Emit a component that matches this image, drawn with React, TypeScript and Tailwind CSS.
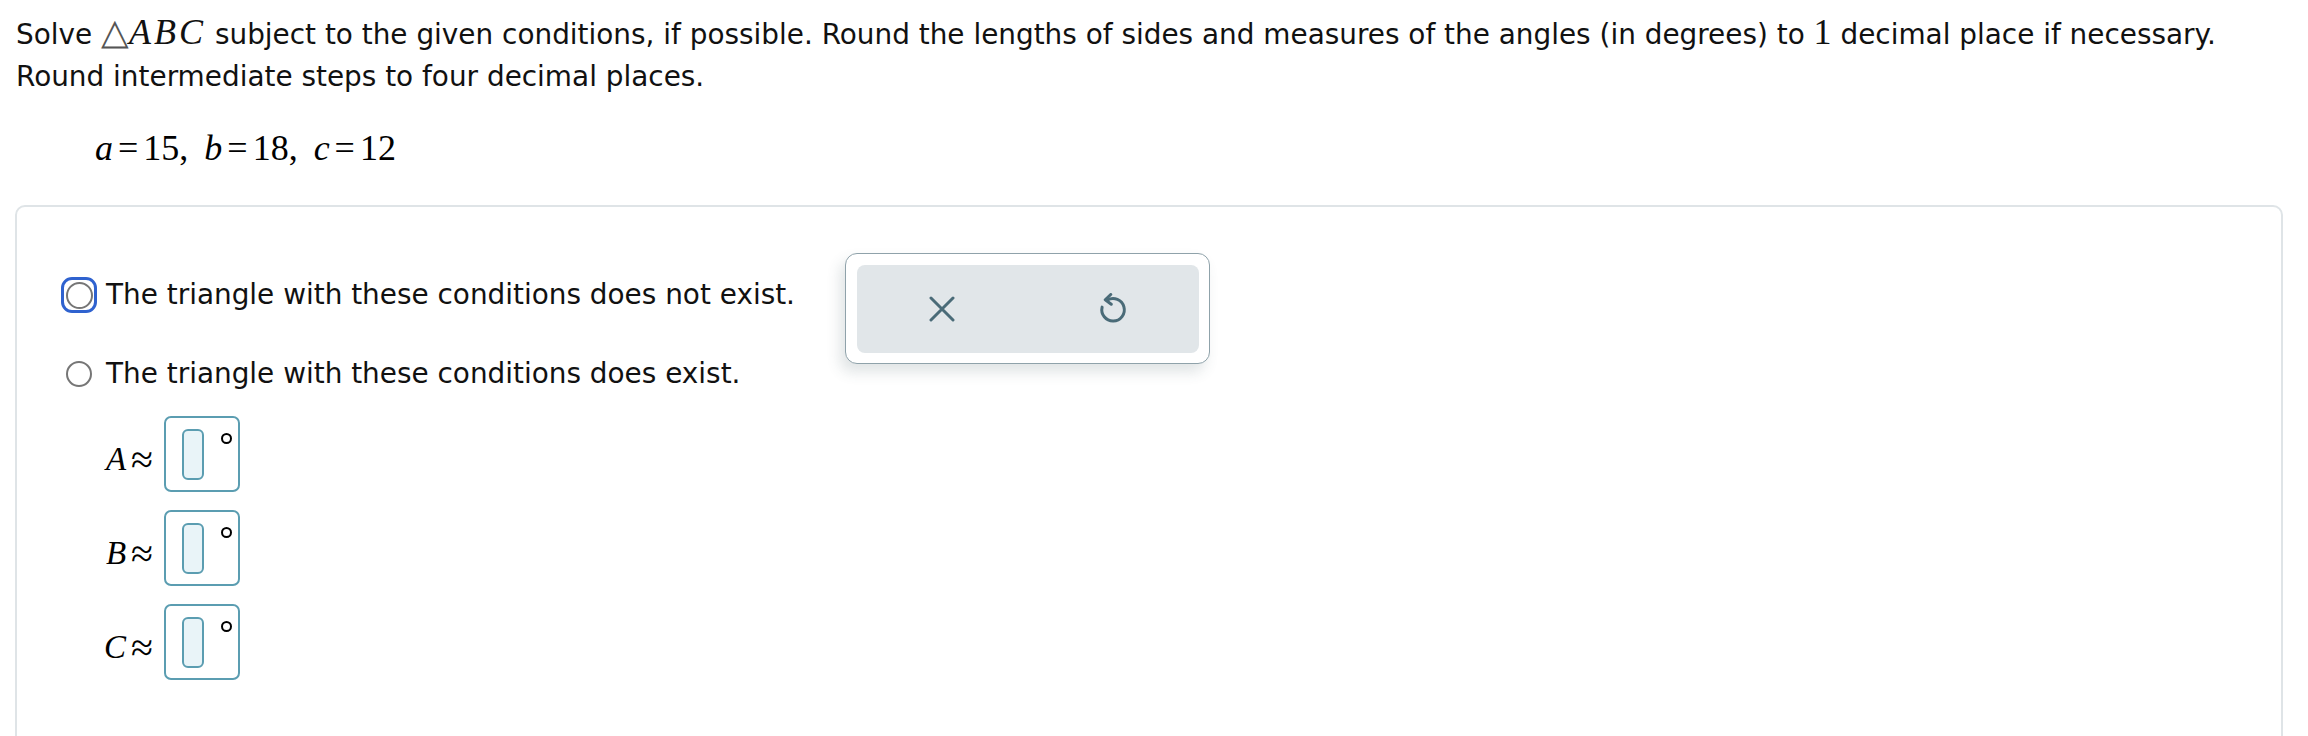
import React from "react";

const serif = { fontFamily: '"Liberation Serif", "Times New Roman", serif' };

function XIcon() {
  return (
    <svg width="26" height="26" viewBox="0 0 26 26" fill="none">
      <path d="M2 2 L24 24 M24 2 L2 24" stroke="#4a6b78" strokeWidth="3" strokeLinecap="round" />
    </svg>
  );
}

function UndoIcon() {
  return (
    <svg width="30" height="32" viewBox="0 0 24 25.6" fill="none">
      <path d="M7.6 5.6 A9 9 0 1 1 3.3 11.3" stroke="#4a6b78" strokeWidth="2.4" strokeLinecap="round" />
      <path d="M10.2 1.2 L5.8 5.4 L10.6 9" stroke="#4a6b78" strokeWidth="2.4" strokeLinecap="round" strokeLinejoin="round" />
    </svg>
  );
}

function AngleRow({ letter }: { letter: string }) {
  return (
    <div className="flex items-start mb-[18px]">
      <div className="w-[92px] h-[76px] flex items-center justify-end pt-[12px] text-black" style={serif}>
        <span className="italic text-[33px]">{letter}</span>
        <span className="ml-[5px] text-[40px] leading-none">≈</span>
      </div>
      <div className="ml-[11px] w-[76px] h-[76px] border-2 border-[#5b9db1] rounded-[7px] flex items-start pl-[16px] pt-[11px]">
        <div className="w-[22px] h-[51px] border-2 border-[#5b9db1] rounded-[6px] bg-[#e9f4f8]" />
        <div className="ml-[17px] mt-[4px] w-[11px] h-[11px] rounded-full border-2 border-black" />
      </div>
    </div>
  );
}

export default function App() {
  return (
    <div
      className="relative w-[2308px] h-[736px] overflow-hidden bg-white text-[#111]"
      style={{ fontFamily: '"DejaVu Sans", Verdana, sans-serif' }}
    >
      <div className="pl-[16px] pt-[11px] text-[27.9px] leading-[42px]">
        <div className="whitespace-nowrap">
          Solve{" "}
          <span style={serif} className="text-[36px]">
            <span className="text-[#555]">△</span>
            <span className="italic tracking-[3px]">ABC</span>
          </span>{" "}
          subject to the given conditions, if possible. Round the lengths of sides and measures of the angles (in degrees) to{" "}
          <span style={serif} className="text-[36px]">1</span> decimal place if necessary.
        </div>
        <div>Round intermediate steps to four decimal places.</div>
      </div>

      <div className="pl-[95px] mt-[25px] h-[50px] leading-[50px] text-[36px] text-black whitespace-nowrap" style={serif}>
        <span className="italic">a</span>
        <span className="mx-[5px]">=</span>
        <span>15</span>
        <span>,</span>
        <span className="ml-[16px] italic">b</span>
        <span className="mx-[5px]">=</span>
        <span>18</span>
        <span>,</span>
        <span className="ml-[16px] italic">c</span>
        <span className="mx-[5px]">=</span>
        <span>12</span>
      </div>

      <div className="ml-[15px] mr-[25px] mt-[32px] h-[600px] border-2 border-[#dfe4e7] rounded-[10px] pl-[44px] pt-[46px] flex items-start">
        <div className="w-[784px] pt-[24px] text-[27.9px]">
          <div className="flex items-center h-[36px]">
            <div className="w-[36px] h-[36px] border-[3px] border-[#2f62cf] rounded-[11px] flex items-center justify-center">
              <div className="w-[27px] h-[27px] rounded-full border-2 border-[#767676] bg-white" />
            </div>
            <span className="ml-[9px] whitespace-nowrap">The triangle with these conditions does not exist.</span>
          </div>
          <div className="flex items-center h-[36px] mt-[43px]">
            <div className="w-[36px] h-[36px] flex items-center justify-center">
              <div className="w-[26px] h-[26px] rounded-full border-2 border-[#767676] bg-white" />
            </div>
            <span className="ml-[9px] whitespace-nowrap">The triangle with these conditions does exist.</span>
          </div>
          <div className="mt-[24px]">
            <AngleRow letter="A" />
            <AngleRow letter="B" />
            <AngleRow letter="C" />
          </div>
        </div>

        <div className="w-[365px] h-[111px] border-[1.5px] border-[#8fa2aa] rounded-[12px] bg-white p-[10.5px] shadow-[-5px_8px_14px_rgba(60,85,95,0.16)]">
          <div className="flex h-full rounded-[8px] bg-[#e1e6e9]">
            <button className="flex-1 flex items-center justify-center">
              <XIcon />
            </button>
            <button className="flex-1 flex items-center justify-center">
              <UndoIcon />
            </button>
          </div>
        </div>
      </div>
    </div>
  );
}
